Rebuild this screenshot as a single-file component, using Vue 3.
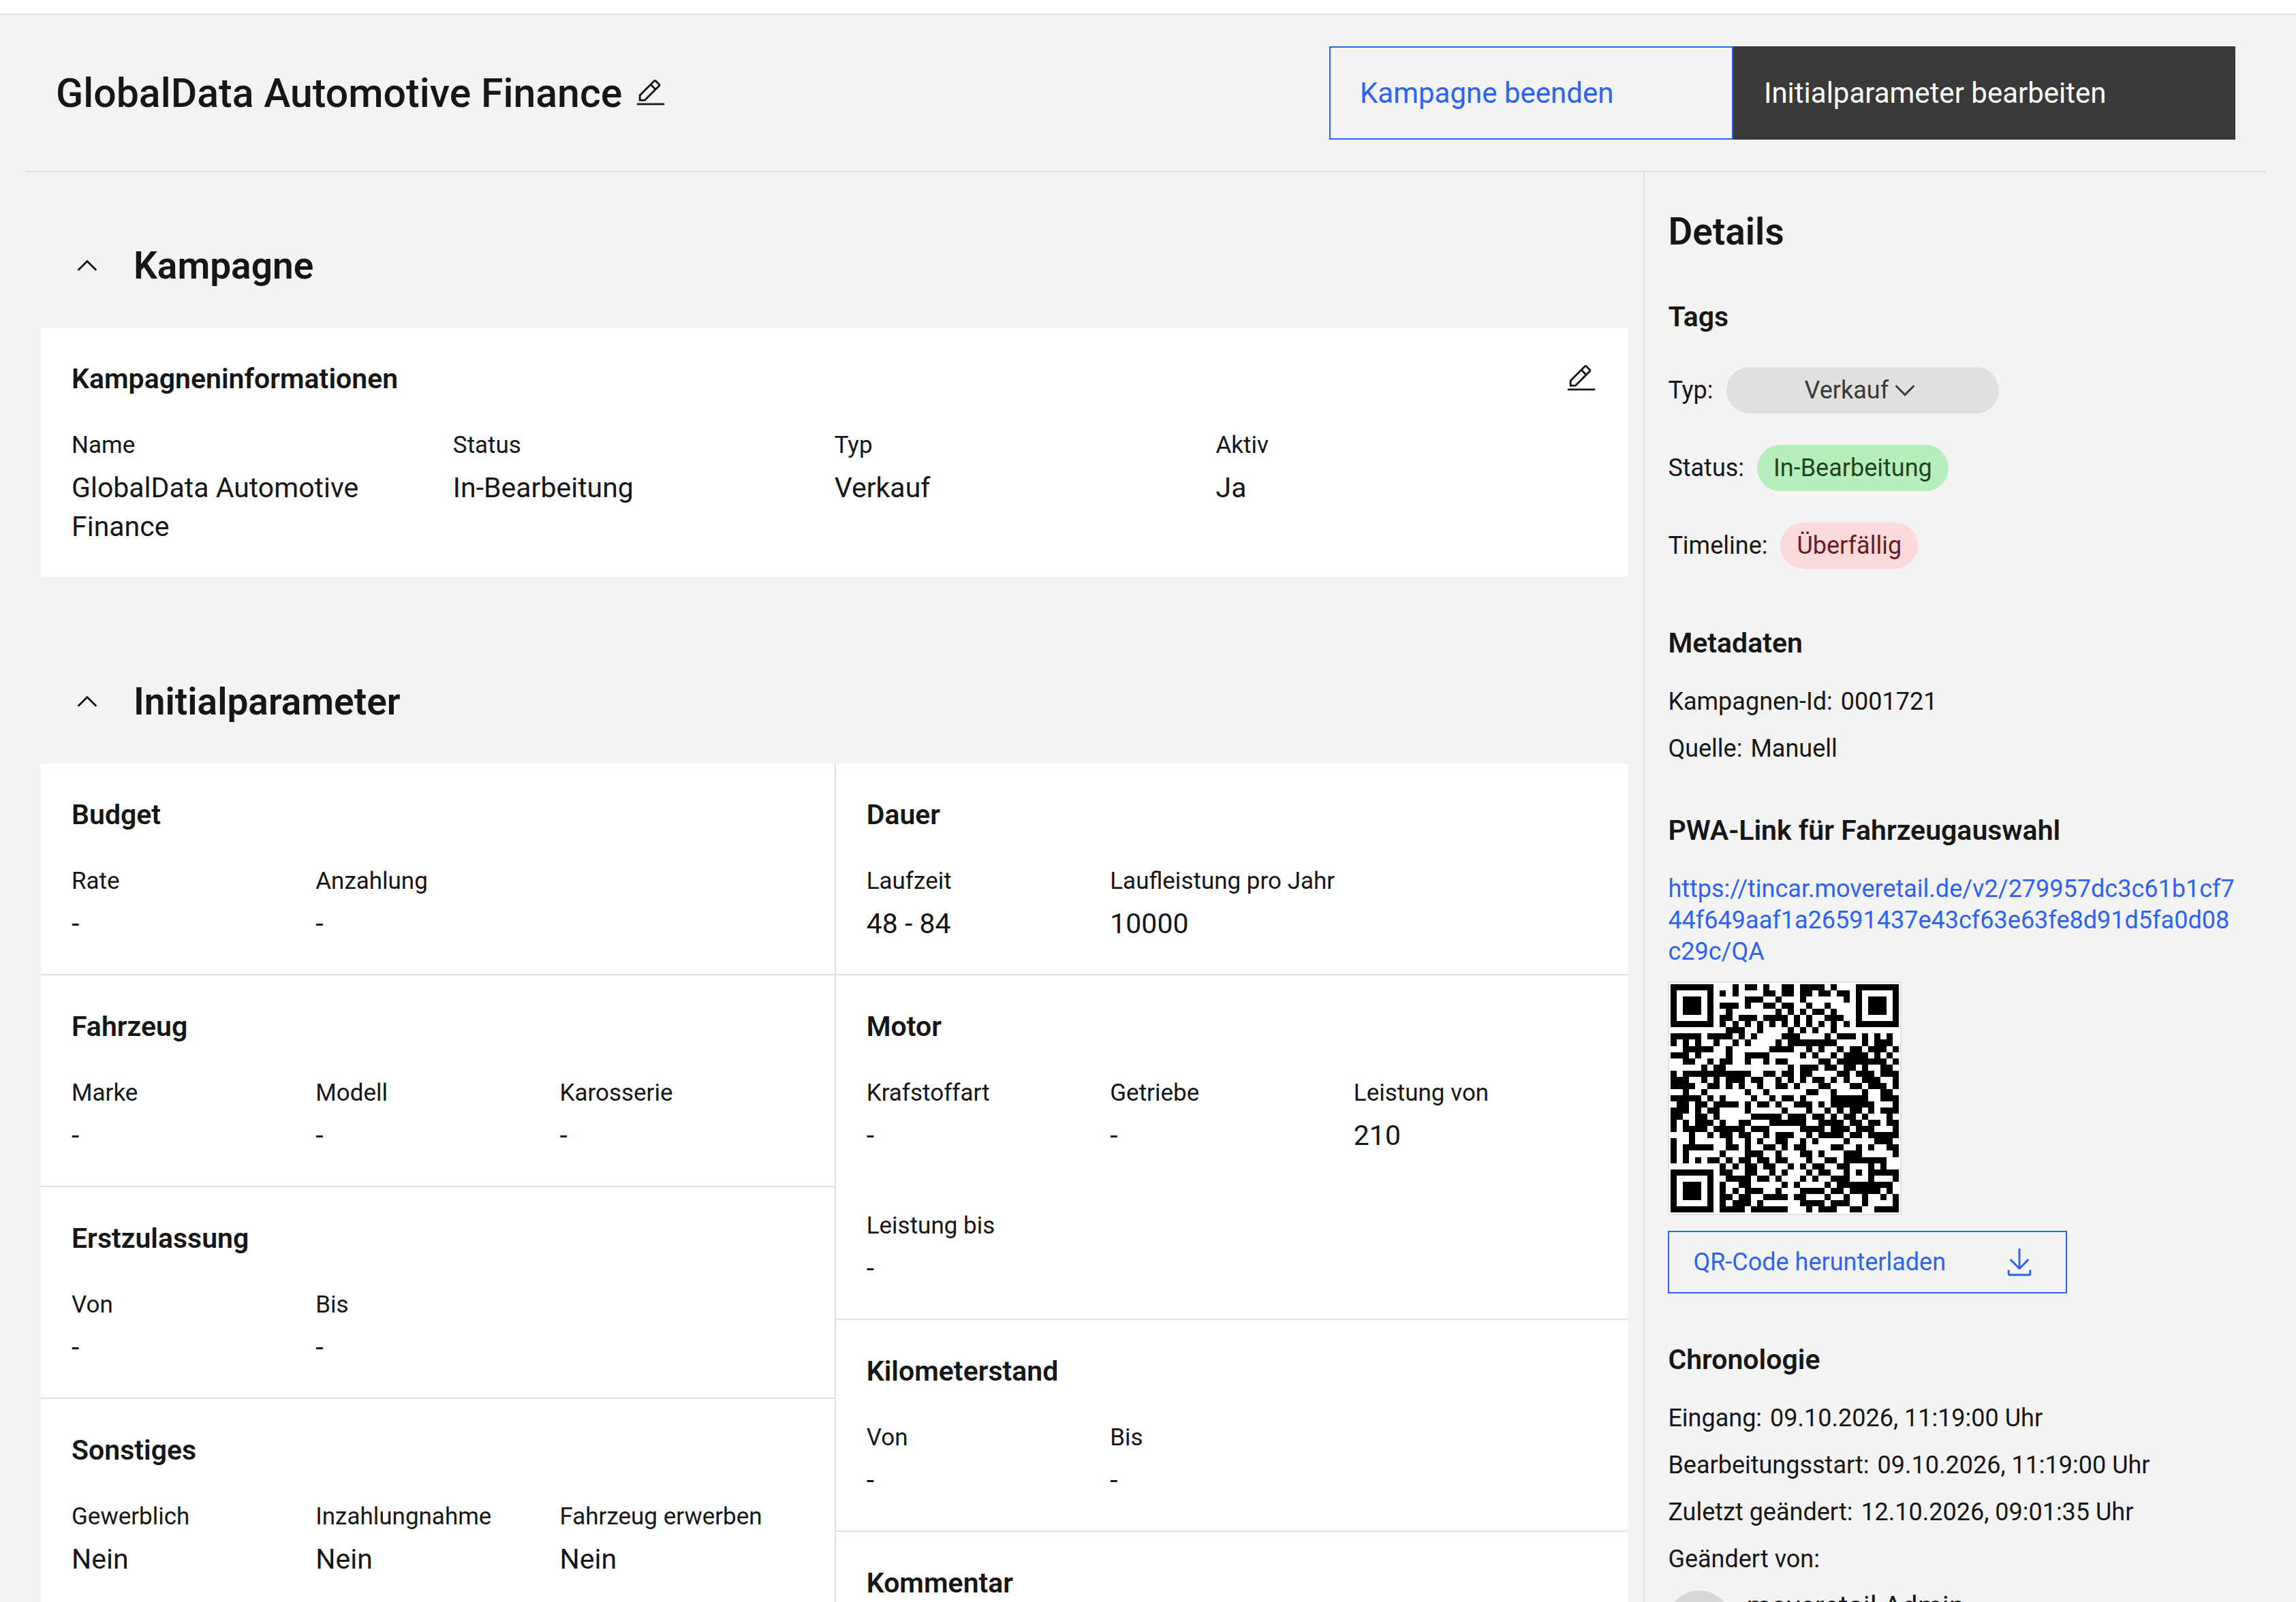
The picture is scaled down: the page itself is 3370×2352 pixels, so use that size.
<template>
    <div class="page">
        <div class="topbar"></div>

        <div class="content">
            <header class="header">
                <h1 class="title">{{ campaign }}</h1>
                <button class="icon-btn" aria-label="Name bearbeiten">
                    <svg class="icon" viewBox="0 0 32 32"><path :d="icons.edit" /></svg>
                </button>
                <div class="actions">
                    <button class="btn btn-outline">Kampagne beenden</button>
                    <button class="btn btn-dark">Initialparameter bearbeiten</button>
                </div>
            </header>

            <div class="columns">
                <main class="main">
                    <section>
                        <h2 class="section-head">
                            <button class="toggle" @click="open.campaign = !open.campaign">
                                <svg class="icon" :class="{ closed: !open.campaign }" viewBox="0 0 32 32"><path :d="icons.up" /></svg>
                                Kampagne
                            </button>
                        </h2>
                        <div v-if="open.campaign" class="card">
                            <div class="card-head">
                                <h3>Kampagneninformationen</h3>
                                <button class="icon-btn" aria-label="Kampagne bearbeiten">
                                    <svg class="icon" viewBox="0 0 32 32"><path :d="icons.edit" /></svg>
                                </button>
                            </div>
                            <dl class="fields fields-4">
                                <div v-for="[label, value] in info" :key="label">
                                    <dt>{{ label }}</dt>
                                    <dd>{{ value }}</dd>
                                </div>
                            </dl>
                        </div>
                    </section>

                    <section class="section-next">
                        <h2 class="section-head">
                            <button class="toggle" @click="open.params = !open.params">
                                <svg class="icon" :class="{ closed: !open.params }" viewBox="0 0 32 32"><path :d="icons.up" /></svg>
                                Initialparameter
                            </button>
                        </h2>
                        <div v-if="open.params" class="params">
                            <div v-for="(column, i) in params" :key="i" class="params-col">
                                <div v-for="group in column" :key="group.title" class="card">
                                    <div class="card-head">
                                        <h3>{{ group.title }}</h3>
                                    </div>
                                    <dl class="fields fields-3">
                                        <div v-for="[label, value] in group.fields" :key="label">
                                            <dt>{{ label }}</dt>
                                            <dd>{{ value }}</dd>
                                        </div>
                                    </dl>
                                </div>
                            </div>
                        </div>
                    </section>
                </main>

                <aside class="sidebar">
                    <h2>Details</h2>

                    <section class="tags">
                        <h3>Tags</h3>
                        <div class="tag-row">
                            <label for="type">Typ:</label>
                            <div class="tag tag-select">
                                <select id="type" v-model="type">
                                    <option>Verkauf</option>
                                </select>
                                <svg class="icon" viewBox="0 0 32 32"><path :d="icons.down" /></svg>
                            </div>
                        </div>
                        <div class="tag-row">
                            <span>Status:</span>
                            <span class="tag tag-green">In-Bearbeitung</span>
                        </div>
                        <div class="tag-row">
                            <span>Timeline:</span>
                            <span class="tag tag-red">Überfällig</span>
                        </div>
                    </section>

                    <section class="details">
                        <h3>Metadaten</h3>
                        <p v-for="[label, value] in meta" :key="label"><span>{{ label }}:</span><span>{{ value }}</span></p>
                    </section>

                    <section class="details">
                        <h3>PWA-Link für Fahrzeugauswahl</h3>
                        <a class="pwa-link" :href="pwaLink">{{ pwaLink }}</a>
                        <svg class="qr" viewBox="0 0 37 37" shape-rendering="crispEdges" role="img" aria-label="QR-Code">
                            <path :d="qrPath" />
                        </svg>
                        <button class="download">
                            QR-Code herunterladen
                            <svg class="icon" viewBox="0 0 32 32"><path :d="icons.download" /></svg>
                        </button>
                    </section>

                    <section class="details">
                        <h3>Chronologie</h3>
                        <p v-for="[label, value] in timeline" :key="label"><span>{{ label }}:</span><span>{{ value }}</span></p>
                        <div class="user">
                            <span class="avatar"></span>
                            <span>moveretail Admin</span>
                        </div>
                    </section>
                </aside>
            </div>
        </div>
    </div>
</template>

<script setup>
import { computed, reactive, ref } from 'vue';

const campaign = 'GlobalData Automotive Finance';
const type = ref('Verkauf');
const open = reactive({ campaign: true, params: true });

const icons = {
    edit: 'M2 26h28v2H2zM25.4 9c.8-.8.8-2 0-2.8l-3.6-3.6c-.8-.8-2-.8-2.8 0l-15 15V24h6.4l15-15zM20.4 4L24 7.6l-3 3L17.4 7l3-3zM6 22v-3.6l10-10 3.6 3.6-10 10H6z',
    up: 'M16 10L26 20l-1.4 1.4-8.6-8.6-8.6 8.6L6 20z',
    down: 'M16 22L6 12l1.4-1.4 8.6 8.6 8.6-8.6L26 12z',
    download: 'M26 24v4H6v-4H4v4a2 2 0 002 2h20a2 2 0 002-2v-4zM26 14l-1.41-1.41L17 20.17V2h-2v18.17l-7.59-7.58L6 14l10 10 10-10z',
};

const info = [
    ['Name', campaign],
    ['Status', 'In-Bearbeitung'],
    ['Typ', 'Verkauf'],
    ['Aktiv', 'Ja'],
];

const params = [
    [
        { title: 'Budget', fields: [['Rate', '-'], ['Anzahlung', '-']] },
        { title: 'Fahrzeug', fields: [['Marke', '-'], ['Modell', '-'], ['Karosserie', '-']] },
        { title: 'Erstzulassung', fields: [['Von', '-'], ['Bis', '-']] },
        { title: 'Sonstiges', fields: [['Gewerblich', 'Nein'], ['Inzahlungnahme', 'Nein'], ['Fahrzeug erwerben', 'Nein']] },
    ],
    [
        { title: 'Dauer', fields: [['Laufzeit', '48 - 84'], ['Laufleistung pro Jahr', '10000']] },
        { title: 'Motor', fields: [['Krafstoffart', '-'], ['Getriebe', '-'], ['Leistung von', '210'], ['Leistung bis', '-']] },
        { title: 'Kilometerstand', fields: [['Von', '-'], ['Bis', '-']] },
        { title: 'Kommentar', fields: [] },
    ],
];

const meta = [
    ['Kampagnen-Id', '0001721'],
    ['Quelle', 'Manuell'],
];

const timeline = [
    ['Eingang', '09.10.2026, 11:19:00 Uhr'],
    ['Bearbeitungsstart', '09.10.2026, 11:19:00 Uhr'],
    ['Zuletzt geändert', '12.10.2026, 09:01:35 Uhr'],
    ['Geändert von', ''],
];

const pwaLink = 'https://tincar.moveretail.de/v2/279957dc3c61b1cf744f649aaf1a26591437e43cf63e63fe8d91d5fa0d08c29c/QA';

// Dark modules per row, as single columns or first-last runs
const qrRows = [
    '0-6 10 12-13 15 18-19 21-24 26 30-36',
    '0 6 8 10 15-16 18-19 21-22 24-25 27-28 30 36',
    '0 2-4 6 12-14 17 21 28 30 32-34 36',
    '0 2-4 6 8-10 12 15-16 18-19 22 25 30 32-34 36',
    '0 2-4 6 9 17 19 21 23-24 26 30 32-34 36',
    '0 6 8-9 11-13 15-18 20 22 25-27 30 36',
    '0-6 8 10 12 14 16 18 20 22 24 26 28 30-36',
    '9-11 14 19 21 23 26',
    '0-4 6-9 11 13 18-20 25 27-29 31 33 35',
    '0 2 4 7 10 12 17 19-26 31 33-35',
    '2-6 9 16-19 22 24 27 29-30 32-34 36',
    '0-2 4 9 12-15 21 23 26 28-31 33 35',
    '2-3 6 8-9 12 15 17-18 24-25 27-34 36',
    '5 7-8 19 21-23 25-26 28-29 31 34-35',
    '0 2-12 15-16 18-19 21-22 27-28 30-32 34-36',
    '0-2 5 7 9-11 13-14 17 19 21 23-24 26 28 31-33 36',
    '0-3 6-7 9 11 14 17-18 20 24-25 29-30 32-34 36',
    '2 5 12 15 22-23 26 31 34-35',
    '0-4 6 8 13 16 18-19 21 26-31 34-36',
    '1-2 4-5 7-10 12 14-15 17 20-22 24 26-32 36',
    '0-2 4 6-7 12 18 22 25 27 29-30 32 34-36',
    '0-1 4-5 7 13-17 19-21 23-24 26 28-29 31 35',
    '0 2 4-6 8 11-12 16-21 24-27 29-30 32-33 35-36',
    '0 2-5 7-11 13-15 21-24 26-28 30-32 36',
    '3 6 8-9 11-12 15 17-19 22 24-27 29-30 32-36',
    '0 3 9 12 14 17-18 21 23 28 33-35',
    '0 2-6 9-10 12 15-16 18 20-21 26-27 30 32 35-36',
    '0 2 8 12-14 17 21-22 24 28-30 36',
    '0 2 4 6-7 9 11-12 14-15 17-18 22 25-26 28-34',
    '8 10 12-13 15-16 19 21 23-24 27-28 32 34',
    '0-6 8-9 12-13 16 18 22 24-25 28 30 32-36',
    '0 6 9-12 14-15 17 21 23 26-28 32 36',
    '0 2-4 6 8 11-12 18 20 25 27-35',
    '0 2-4 6 8 10 12-14 17 21-24 26-27 29-33 35',
    '0 2-4 6 8-9 11-12 15-18 20-21 25 28 31 34 36',
    '0 6 8 10-12 14 21-24 26-28 31 36',
    '0-6 8-11 13-18 22 24-26 29-30 33-36',
];

const qrPath = computed(() => qrRows.map((row, y) => row.split(' ').map((run) => {
    const [from, to = from] = run.split('-').map(Number);
    return `M${from} ${y}h${to - from + 1}v1H${from}z`;
}).join('')).join(''));
</script>

<style>
body {
    background: #f3f3f3;
}
</style>

<style scoped>
.page {
    height: 100vh;
    overflow: hidden;
    background: #f3f3f3;
    color: #161616;
    font-family: Roboto, "Liberation Sans", sans-serif;
    font-size: 41px;
    line-height: 57px;
}

h1, h2, h3, p, dl, dd {
    margin: 0;
}

button, select {
    padding: 0;
    border: 0;
    background: none;
    color: inherit;
    font: inherit;
    cursor: pointer;
}

.icon {
    display: block;
    flex-shrink: 0;
    width: 46px;
    height: 46px;
    fill: currentColor;
}

.topbar {
    height: 20px;
    background: #fff;
    border-bottom: 2px solid #e0e0e0;
}

.content {
    padding: 0 44px 0 37px;
}

/* Header */
.header {
    display: flex;
    align-items: center;
    padding: 46px 45px;
    border-bottom: 2px solid #e0e0e0;
}

.title {
    font-size: 59px;
    line-height: 72px;
    font-weight: 500;
}

.header .icon-btn {
    margin-left: 19px;
}

.actions {
    display: flex;
    margin-left: auto;
}

.btn {
    height: 137px;
    padding: 0 43px;
    border: 2px solid;
    font-size: 42px;
    text-align: left;
}

.btn-outline {
    width: 593px;
    border-color: #2c62f6;
    color: #2c62f6;
}

.btn-dark {
    width: 737px;
    border-color: #393939;
    background: #393939;
    color: #fff;
}

.columns {
    display: grid;
    grid-template-columns: 13fr 5fr;
}

/* Main */
.main {
    min-width: 0;
    padding: 0 23px;
}

.section-next {
    margin-top: 46px;
}

.section-head {
    padding: 91px 0 45px;
    font-size: 55px;
    line-height: 92px;
    font-weight: 600;
}

.toggle {
    display: flex;
    align-items: center;
    gap: 45px;
    padding-left: 45px;
}

.closed {
    transform: rotate(180deg);
}

.card {
    padding: 45px;
    background: #fff;
}

.card-head {
    display: flex;
    align-items: center;
    justify-content: space-between;
    height: 60px;
    margin-bottom: 45px;
}

h3 {
    font-size: 41px;
    line-height: 56px;
    font-weight: 600;
}

.fields {
    display: grid;
    row-gap: 81px;
}

.fields-4 {
    grid-template-columns: repeat(4, 1fr);
}

.fields-3 {
    grid-template-columns: repeat(3, 1fr);
}

.fields dt {
    margin-bottom: 11px;
    font-size: 35px;
    line-height: 46px;
}

.params {
    display: grid;
    grid-template-columns: 1fr 1fr;
    background: #fff;
}

.params-col + .params-col {
    border-left: 2px solid #dfe2e5;
}

.params-col .card + .card {
    border-top: 2px solid #dfe2e5;
}

/* Sidebar */
.sidebar {
    padding: 52px 45px 0 34px;
    border-left: 2px solid #e0e0e0;
    font-size: 36px;
    line-height: 46px;
}

.sidebar h2 {
    margin-bottom: 62px;
    font-size: 55px;
    line-height: 70px;
    font-weight: 600;
}

.tags {
    display: flex;
    flex-direction: column;
    gap: 46px;
    margin-bottom: 81px;
}

.tag-row {
    display: flex;
    align-items: center;
    gap: 19px;
}

.tag {
    display: flex;
    align-items: center;
    justify-content: center;
    height: 68px;
    padding: 0 24px;
    border-radius: 34px;
}

.tag-select {
    width: 400px;
    padding: 0;
    background: #e0e0e0;
    color: #393939;
}

.tag-select select {
    appearance: none;
    outline: none;
}

.tag-green {
    background: #b6efbe;
    color: #1d4620;
}

.tag-red {
    background: #f9d9da;
    color: #6b1a1e;
}

.details {
    margin-bottom: 69px;
}

.details h3 {
    margin-bottom: 35px;
}

.details p {
    display: flex;
    gap: 12px;
    margin-bottom: 23px;
}

.pwa-link {
    display: block;
    color: #2c62f6;
    text-decoration: none;
    word-break: break-all;
}

.qr {
    display: block;
    box-sizing: border-box;
    width: 343px;
    height: 343px;
    margin: 21px 0 23px;
    padding: 2px;
    border: 2px solid #dee2e6;
    background: #fff;
}

.download {
    display: flex;
    align-items: center;
    justify-content: space-between;
    width: 586px;
    height: 92px;
    padding: 0 45px 0 35px;
    border: 2px solid #2c62f6;
    color: #2c62f6;
}

.user {
    display: flex;
    gap: 23px;
    font-size: 41px;
}

.avatar {
    width: 92px;
    height: 92px;
    border-radius: 50%;
    background: #d8d8d8;
}
</style>
